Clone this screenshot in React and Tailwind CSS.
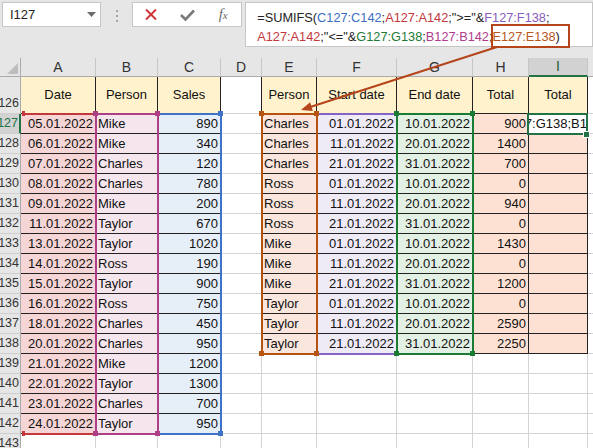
import React from 'react';

const T1 = [
  ['05.01.2022', 'Mike', 890],
  ['06.01.2022', 'Mike', 340],
  ['07.01.2022', 'Charles', 120],
  ['08.01.2022', 'Charles', 780],
  ['09.01.2022', 'Mike', 200],
  ['11.01.2022', 'Taylor', 670],
  ['13.01.2022', 'Taylor', 1020],
  ['14.01.2022', 'Ross', 190],
  ['15.01.2022', 'Taylor', 900],
  ['16.01.2022', 'Ross', 750],
  ['18.01.2022', 'Charles', 450],
  ['20.01.2022', 'Charles', 950],
  ['21.01.2022', 'Mike', 1200],
  ['22.01.2022', 'Taylor', 1300],
  ['23.01.2022', 'Charles', 700],
  ['24.01.2022', 'Taylor', 950],
];

const T2 = [
  ['Charles', '01.01.2022', '10.01.2022', 900],
  ['Charles', '11.01.2022', '20.01.2022', 1400],
  ['Charles', '21.01.2022', '31.01.2022', 700],
  ['Ross', '01.01.2022', '10.01.2022', 0],
  ['Ross', '11.01.2022', '20.01.2022', 940],
  ['Ross', '21.01.2022', '31.01.2022', 0],
  ['Mike', '01.01.2022', '10.01.2022', 1430],
  ['Mike', '11.01.2022', '20.01.2022', 0],
  ['Mike', '21.01.2022', '31.01.2022', 1200],
  ['Taylor', '01.01.2022', '10.01.2022', 0],
  ['Taylor', '11.01.2022', '20.01.2022', 2590],
  ['Taylor', '21.01.2022', '31.01.2022', 2250],
];

const GRID = 'border-r-[#d4d4d4] border-b-[#d4d4d4]';
const BLACK = 'border-r-[#222222] border-b-[#222222]';
const YEL = 'bg-[#fff2cc]';

// corner handles of a range outline, relative to the outline's padding box
const TL = '-left-[4px] -top-[4px]';
const TR = '-right-[3px] -top-[4px]';
const BL = '-left-[4px] -bottom-[3px]';
const BR = '-right-[3px] -bottom-[3px]';

function Cell({ h = 'h-[20px]', bg = 'bg-white', borders = GRID, align = 'left', children }) {
  const al =
    align === 'right' ? 'justify-end pr-[2px]' : align === 'center' ? 'justify-center' : 'justify-start pl-[2px]';
  return (
    <div className={`${h} ${bg} ${borders} border-r border-b flex items-center overflow-hidden whitespace-nowrap ${al}`}>
      {children}
    </div>
  );
}

function RowHead({ n, active, tall }) {
  return (
    <div
      className={`${tall ? 'h-[37px] items-end' : 'h-[20px] items-center'} flex justify-end pr-[1px] overflow-hidden whitespace-nowrap text-[12.5px] border-b border-b-[#cfcfcf] ${
        active
          ? 'bg-[#d2d2d2] text-[#217346] border-r-2 border-r-[#217346]'
          : 'bg-[#e6e6e6] text-[#333333] border-r border-r-[#ababab]'
      }`}
    >
      {n}
    </div>
  );
}

function ColHead({ l, active }) {
  return (
    <div
      className={`h-[19px] flex items-center justify-center text-[14px] border-r border-r-[#c6c6c6] overflow-hidden ${
        active
          ? 'bg-[#d2d2d2] text-[#1d5e38] border-b-2 border-b-[#217346]'
          : 'bg-[#e6e6e6] text-[#333333] border-b border-b-[#ababab]'
      }`}
    >
      {l}
    </div>
  );
}

function Range({ box, color, fill, corners }) {
  return (
    <div className={`absolute border-2 ${box} ${color}`}>
      {corners.map((c) => (
        <span key={c} className={`absolute w-[5px] h-[5px] ${c} ${fill}`} />
      ))}
    </div>
  );
}

function FormulaBar() {
  return (
    <div className="h-[58px] bg-[#e6e6e6] flex items-start pt-[2px] pl-[2px]">
      <div className="w-[100px] h-[25px] bg-white border border-[#c6c6c6] flex items-center justify-between pl-[7px] pr-[4px] text-[13px] text-[#222]">
        <span>I127</span>
        <svg width="9" height="5" viewBox="0 0 9 5">
          <polygon points="0,0 9,0 4.5,5" fill="#6b6b6b" />
        </svg>
      </div>
      <div className="w-[31px] flex flex-col items-center gap-[3px] pt-[8px]">
        <span className="w-[2px] h-[2px] bg-[#a6a6a6]" />
        <span className="w-[2px] h-[2px] bg-[#a6a6a6]" />
        <span className="w-[2px] h-[2px] bg-[#a6a6a6]" />
      </div>
      <div className="w-[110px] h-[25px] bg-white border border-[#c6c6c6] flex items-center">
        <div className="w-[36px] flex justify-center">
          <svg width="12" height="11" viewBox="0 0 12 11">
            <path d="M1 0.5 L11 10.5 M11 0.5 L1 10.5" stroke="#d13438" strokeWidth="2" />
          </svg>
        </div>
        <div className="w-[36px] flex justify-center">
          <svg width="15" height="12" viewBox="0 0 15 12">
            <path d="M1 6 L5.5 10.5 L14 1.5" stroke="#7a7a7a" strokeWidth="2.6" fill="none" />
          </svg>
        </div>
        <div className="w-[36px] flex justify-center">
          <span className="italic font-['Liberation_Serif',serif] text-[15px] leading-none text-[#6a6a6a]">
            f<span className="text-[11px]">x</span>
          </span>
        </div>
      </div>
      <div className="ml-[3px] w-[350px] h-[45px] bg-white border border-[#c6c6c6] pl-[11px] pt-[5px] text-[12.75px] leading-[19px] text-[#222] whitespace-nowrap">
        <div>
          =SUMIFS(<span className="text-[#3a6fc4]">C127:C142</span>;<span className="text-[#c4373b]">A127:A142</span>;"&gt;="&amp;
          <span className="text-[#8a5cbc]">F127:F138</span>;
        </div>
        <div>
          <span className="text-[#c4373b]">A127:A142</span>;"&lt;="&amp;<span className="text-[#1f7a35]">G127:G138</span>;
          <span className="text-[#b03d8c]">B127:B142</span>;<span className="text-[#b8561c]">E127:E138</span>)
        </div>
      </div>
    </div>
  );
}

export default function App() {
  const cells = [];

  // column letters
  cells.push(
    <div key="corner" className="h-[19px] bg-[#e6e6e6] border-r border-r-[#ababab] border-b border-b-[#ababab] flex items-end justify-end pr-[2px] pb-[2px]">
      <svg width="11" height="11" viewBox="0 0 11 11">
        <polygon points="11,0 11,11 0,11" fill="#bdbdbd" />
      </svg>
    </div>
  );
  ['A', 'B', 'C', 'D', 'E', 'F', 'G', 'H', 'I', 'J'].forEach((l) =>
    cells.push(<ColHead key={'c' + l} l={l} active={l === 'I'} />)
  );

  // header row 126
  cells.push(<RowHead key="r126" n={126} tall />);
  ['Date', 'Person', 'Sales'].forEach((t) =>
    cells.push(
      <Cell key={'h1' + t} h="h-[37px]" bg={YEL} borders={BLACK} align="center">
        {t}
      </Cell>
    )
  );
  cells.push(<Cell key="h1D" h="h-[37px]" borders="border-r-[#222222] border-b-[#d4d4d4]" />);
  ['Person', 'Start date', 'End date', 'Total', 'Total'].forEach((t, i) =>
    cells.push(
      <Cell key={'h2' + i} h="h-[37px]" bg={YEL} borders={BLACK} align="center">
        {t}
      </Cell>
    )
  );
  cells.push(<Cell key="h1J" h="h-[37px]" />);

  for (let i = 0; i < 17; i++) {
    const n = 127 + i;
    const a = T1[i];
    const b = i < 12 ? T2[i] : null;
    cells.push(<RowHead key={'r' + n} n={n} active={n === 127} />);
    if (a) {
      cells.push(
        <Cell key={'a' + n} bg="bg-[#f5d5d5]" borders={BLACK} align="right">
          {a[0]}
        </Cell>
      );
      cells.push(
        <Cell key={'b' + n} bg="bg-[#f5e6ee]" borders={BLACK}>
          {a[1]}
        </Cell>
      );
      cells.push(
        <Cell key={'cc' + n} bg="bg-[#e6eef8]" borders={BLACK} align="right">
          {a[2]}
        </Cell>
      );
    } else {
      cells.push(<Cell key={'a' + n} />, <Cell key={'b' + n} />, <Cell key={'cc' + n} />);
    }
    cells.push(<Cell key={'d' + n} />);
    if (b) {
      cells.push(
        <Cell key={'e' + n} bg="bg-[#fae6dc]" borders={BLACK}>
          {b[0]}
        </Cell>
      );
      cells.push(
        <Cell key={'f' + n} bg="bg-[#eeebf7]" borders={BLACK} align="right">
          {b[1]}
        </Cell>
      );
      cells.push(
        <Cell key={'g' + n} bg="bg-[#e3f0e4]" borders={BLACK} align="right">
          {b[2]}
        </Cell>
      );
      cells.push(
        <Cell key={'hh' + n} bg="bg-[#fde2d3]" borders={BLACK} align="right">
          {b[3]}
        </Cell>
      );
      cells.push(
        n === 127 ? (
          <Cell key={'i' + n} borders={BLACK} align="right">
            <span className="-mr-[2px]">27:G138;B1</span>
          </Cell>
        ) : (
          <Cell key={'i' + n} bg="bg-[#fde2d3]" borders={BLACK} />
        )
      );
    } else {
      cells.push(
        <Cell key={'e' + n} />,
        <Cell key={'f' + n} />,
        <Cell key={'g' + n} />,
        <Cell key={'hh' + n} />,
        <Cell key={'i' + n} />
      );
    }
    cells.push(<Cell key={'j' + n} />);
  }

  return (
    <div className="relative w-[593px] h-[448px] overflow-hidden bg-white font-['Liberation_Sans',Arial,sans-serif] text-[13px] text-[#111]">
      <FormulaBar />
      <div className="grid grid-cols-[21px_75px_62px_63px_41px_55px_80px_76px_56px_59px_80px]">{cells}</div>

      {/* outlines of the ranges referenced by the formula being edited */}
      <Range
        box="left-[22px] top-[113px] w-[75px] h-[322px] border-l-0"
        color="border-[#c4373b]"
        fill="bg-[#c4373b]"
        corners={['left-0 -top-[4px] !w-[3px]', 'left-0 -bottom-[3px] !w-[3px]']}
      />
      <Range
        box="left-[157px] top-[113px] w-[65px] h-[322px]"
        color="border-[#3f73c8]"
        fill="bg-[#3f73c8]"
        corners={[TR, BR]}
      />
      <Range
        box="left-[95px] top-[113px] w-[64px] h-[322px]"
        color="border-[#ad3f87]"
        fill="bg-[#ad3f87]"
        corners={[TL, TR, BL, BR]}
      />
      <Range
        box="left-[316px] top-[113px] w-[82px] h-[242px]"
        color="border-[#8463c4]"
        fill="bg-[#8463c4]"
        corners={[]}
      />
      <Range
        box="left-[261px] top-[113px] w-[57px] h-[242px]"
        color="border-[#b5530f]"
        fill="bg-[#b5530f]"
        corners={[TL, TR, BL, BR]}
      />
      <Range
        box="left-[396px] top-[113px] w-[78px] h-[242px]"
        color="border-[#1a7b33]"
        fill="bg-[#1a7b33]"
        corners={[TL, TR, BL, BR]}
      />

      {/* active cell I127 with its fill handle */}
      <div className="absolute left-[527px] top-[113px] w-[61px] h-[22px] border-2 border-[#217346]">
        <span className="absolute -right-[4px] -bottom-[5px] w-[7px] h-[7px] bg-[#217346] border border-white" />
      </div>

      {/* callout */}
      <div className="absolute left-[491px] top-[24px] w-[79px] h-[24px] border-2 border-[#b5451b]" />
      <svg className="absolute left-0 top-0 pointer-events-none" width="593" height="448" viewBox="0 0 593 448">
        <line x1="497" y1="47" x2="311" y2="106.7" stroke="#b5451b" strokeWidth="2" />
        <polygon points="301,110 310.1,102.3 312.9,110.9" fill="#b5451b" />
      </svg>
    </div>
  );
}
